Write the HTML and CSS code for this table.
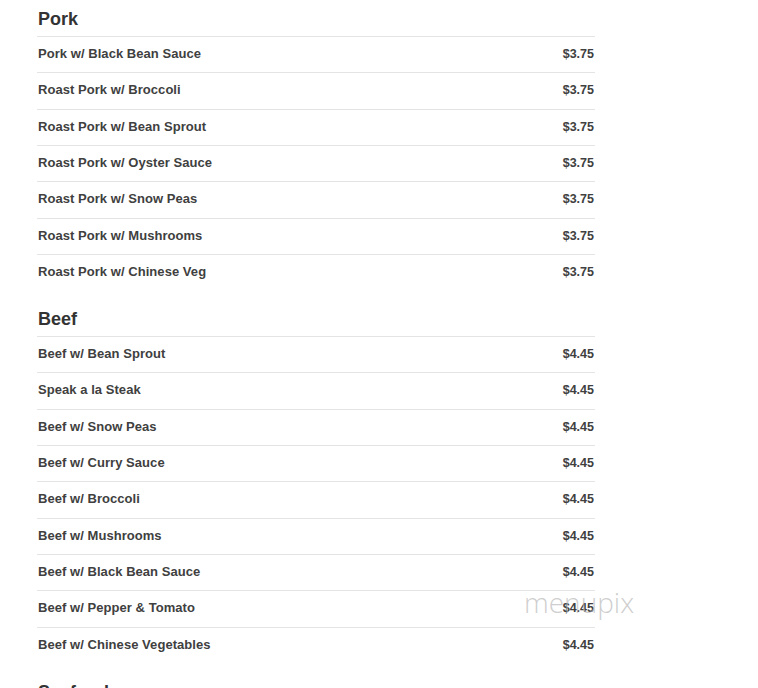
FILE: index.html
```html
<!DOCTYPE html>
<html>
<head>
<meta charset="utf-8">
<link rel="stylesheet" href="styles.css">
</head>
<body>
<div class="menu">
  <section class="section">
    <h2 class="section-title">Pork</h2>
    <div class="row"><span class="name">Pork w/ Black Bean Sauce</span><span class="price">$3.75</span></div>
    <div class="row"><span class="name">Roast Pork w/ Broccoli</span><span class="price">$3.75</span></div>
    <div class="row"><span class="name">Roast Pork w/ Bean Sprout</span><span class="price">$3.75</span></div>
    <div class="row"><span class="name">Roast Pork w/ Oyster Sauce</span><span class="price">$3.75</span></div>
    <div class="row"><span class="name">Roast Pork w/ Snow Peas</span><span class="price">$3.75</span></div>
    <div class="row"><span class="name">Roast Pork w/ Mushrooms</span><span class="price">$3.75</span></div>
    <div class="row"><span class="name">Roast Pork w/ Chinese Veg</span><span class="price">$3.75</span></div>
  </section>
  <section class="section">
    <h2 class="section-title">Beef</h2>
    <div class="row"><span class="name">Beef w/ Bean Sprout</span><span class="price">$4.45</span></div>
    <div class="row"><span class="name">Speak a la Steak</span><span class="price">$4.45</span></div>
    <div class="row"><span class="name">Beef w/ Snow Peas</span><span class="price">$4.45</span></div>
    <div class="row"><span class="name">Beef w/ Curry Sauce</span><span class="price">$4.45</span></div>
    <div class="row"><span class="name">Beef w/ Broccoli</span><span class="price">$4.45</span></div>
    <div class="row"><span class="name">Beef w/ Mushrooms</span><span class="price">$4.45</span></div>
    <div class="row"><span class="name">Beef w/ Black Bean Sauce</span><span class="price">$4.45</span></div>
    <div class="row"><span class="name">Beef w/ Pepper &amp; Tomato</span><span class="price">$4.45</span></div>
    <div class="row"><span class="name">Beef w/ Chinese Vegetables</span><span class="price">$4.45</span></div>
  </section>
  <section class="section">
    <h2 class="section-title">Seafood</h2>
  </section>
</div>
<div class="watermark">menupix</div>
</body>
</html>
```

FILE: styles.css
```css
html, body {
  margin: 0;
  padding: 0;
  background: #ffffff;
}
body {
  font-family: "Liberation Sans", Arial, sans-serif;
  color: #333333;
  overflow: hidden;
  height: 688px;
  position: relative;
}
.menu {
  width: 558px;
  padding-left: 37px;
  display: flex;
  flex-direction: column;
  gap: 9.67px;
}
.section {
  display: flex;
  flex-direction: column;
}
.section-title {
  margin: 0;
  padding: 8px 0 6px 1px;
  font-size: 18px;
  line-height: 22px;
  font-weight: bold;
  color: #333333;
}
.row {
  display: flex;
  justify-content: space-between;
  align-items: baseline;
  border-top: 1px solid #e4e4e4;
  line-height: 32px;
  padding-top: 1px;
  padding-bottom: 2.33px;
}
.name {
  font-size: 13px;
  font-weight: bold;
  letter-spacing: 0.05px;
  padding-left: 1px;
  color: #404040;
}
.price {
  font-size: 12.5px;
  font-weight: bold;
  color: #404040;
  padding-right: 1px;
}
.watermark {
  position: absolute;
  left: 524px;
  top: 584px;
  font-family: "Open Sans", sans-serif;
  font-weight: 300;
  font-size: 28px;
  line-height: 36px;
  color: rgba(185, 185, 185, 0.7);
}
```
